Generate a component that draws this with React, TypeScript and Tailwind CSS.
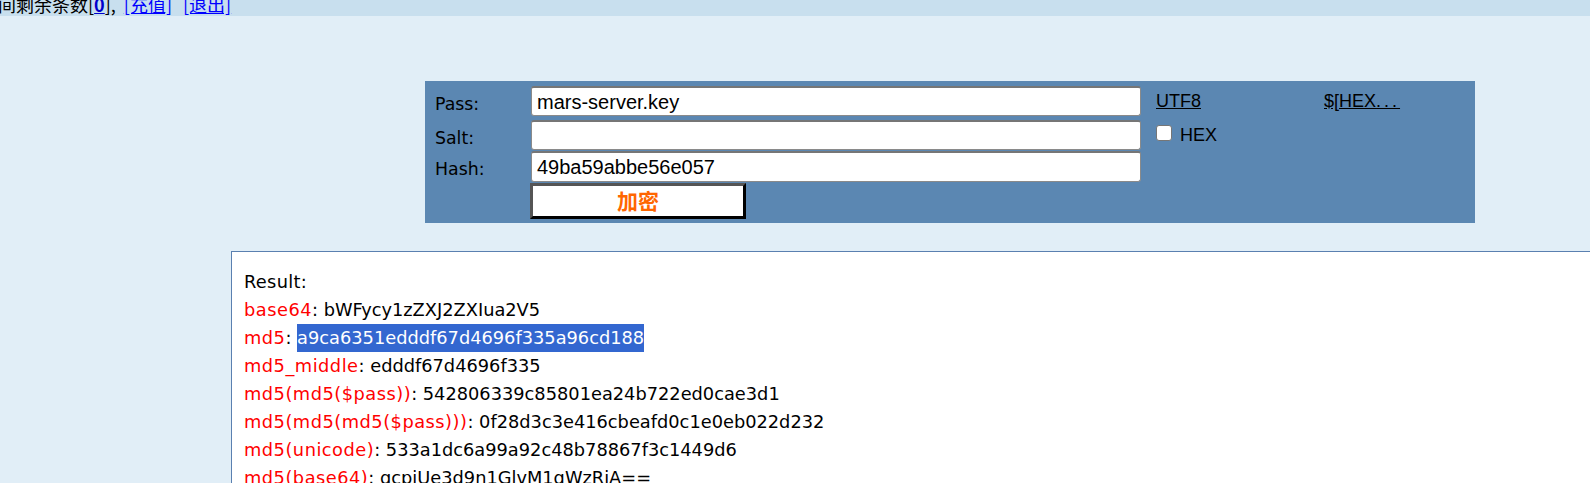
import React from "react";

const rows: [string, string][] = [
  ["base64", "bWFycy1zZXJ2ZXIua2V5"],
  ["md5", "a9ca6351edddf67d4696f335a96cd188"],
  ["md5_middle", "edddf67d4696f335"],
  ["md5(md5($pass))", "542806339c85801ea24b722ed0cae3d1"],
  ["md5(md5(md5($pass)))", "0f28d3c3e416cbeafd0c1e0eb022d232"],
  ["md5(unicode)", "533a1dc6a99a92c48b78867f3c1449d6"],
  ["md5(base64)", "qcpjUe3d9n1GlvM1qWzRiA=="],
  ["sha1", "6b1e2f0e6d8f5a3c9b7d4e2a1f0c8b6d5e4a3c2b"],
  ["sha256", "3f9a1c2b7e6d5a4f8c0b1e2d3a4c5b6e7f8091a2b3c4d5e6f708192a3b4c5d6e"],
];

export default function App() {
  return (
    <div className="w-[1590px] h-[483px] overflow-hidden bg-[#e1eef7] font-['DejaVu_Sans',sans-serif]">
      {/* top bar */}
      <div className="h-[16px] bg-[#c8dfee] overflow-hidden">
        <div className="-mt-[5px] -ml-[2px] whitespace-nowrap text-[18px] leading-[18px] text-black font-['Noto_Sans_CJK_SC',sans-serif]">
          间剩余条数[
          <a className="text-[#0000cc] font-bold underline">0</a>],
          <a className="ml-[8px] text-[#0000ff] underline">[充值]</a>
          <a className="ml-[11px] text-[#0000ff] underline">[退出]</a>
        </div>
      </div>

      {/* form panel */}
      <div className="ml-[425px] mt-[65px] w-[1050px] h-[142px] bg-[#5b87b2] pt-[5px] text-black">
        <div className="flex items-center h-[30px]">
          <div className="w-[106px] pl-[10px] pt-[5px] text-[17.33px] leading-[20px]">Pass:</div>
          <div className="w-[610px] h-[30px] bg-white border border-[#8a8a8a] border-t-2 border-t-[#767676] rounded-[3px] px-[5px] flex items-center text-[20px] font-['Liberation_Sans',sans-serif]">
            mars-server.key
          </div>
          <a className="ml-[15px] w-[168px] underline text-[18px] font-['Liberation_Sans',sans-serif]">UTF8</a>
          <a className="underline text-[18px] font-['Liberation_Sans',sans-serif]">
            $[HEX<span className="tracking-[3px]">...</span>
          </a>
        </div>
        <div className="flex items-center h-[30px] mt-[4px]">
          <div className="w-[106px] pl-[10px] pt-[5px] text-[17.33px] leading-[20px]">Salt:</div>
          <div className="w-[610px] h-[30px] bg-white border border-[#8a8a8a] border-t-2 border-t-[#767676] rounded-[3px]" />
          <div className="ml-[15px] flex items-center">
            <span className="-mt-[5px] w-[16px] h-[16px] bg-white border border-[#767676] rounded-[3px]" />
            <span className="ml-[8px] text-[18px] font-['Liberation_Sans',sans-serif]">HEX</span>
          </div>
        </div>
        <div className="flex items-center h-[31px] mt-[1px]">
          <div className="w-[106px] pl-[10px] pt-[5px] text-[17.33px] leading-[20px]">Hash:</div>
          <div className="w-[610px] h-[31px] bg-white border border-[#8a8a8a] border-t-2 border-t-[#767676] rounded-[3px] px-[5px] flex items-center text-[20px] font-['Liberation_Sans',sans-serif]">
            49ba59abbe56e057
          </div>
        </div>
        <div className="flex mt-[1px]">
          <button className="ml-[105px] w-[216px] h-[36px] bg-white border-[3px] border-t-[#555] border-l-[#555] border-r-black border-b-black text-[#ff6600] font-bold text-[21px] font-['Noto_Sans_CJK_SC',sans-serif] flex items-center justify-center">
            加密
          </button>
        </div>
      </div>

      {/* result */}
      <div className="ml-[231px] mt-[28px] w-[1420px] h-[400px] bg-white border border-[#5a80b0] pt-[16px] pl-[12px] text-[17.8px] leading-[28px] text-black whitespace-nowrap">
        <div className="tracking-[0.3px]">Result:</div>
        {rows.map(([k, v]) => (
          <div key={k}>
            <span className="text-[#ff0000] tracking-[0.5px]">{k}</span>:{" "}
            {k === "md5" ? (
              <span className="inline-block align-top bg-[#3367d0] text-white h-[28px]">{v}</span>
            ) : (
              <span>{v}</span>
            )}
          </div>
        ))}
      </div>
    </div>
  );
}
